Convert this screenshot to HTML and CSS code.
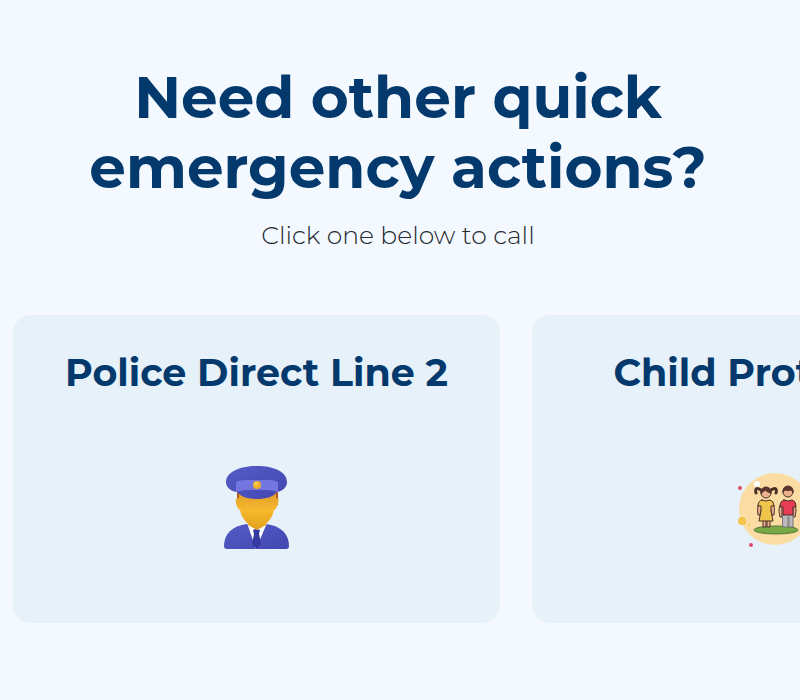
FILE: index.html
```html
<!DOCTYPE html>
<html lang="en">
<head>
<meta charset="utf-8">
<meta name="viewport" content="width=device-width, initial-scale=1">
<title>Emergency actions</title>
<link rel="stylesheet" href="styles.css">
</head>
<body>
<main class="page">
  <header class="intro">
    <h1 class="intro-title">Need other quick emergency actions?</h1>
    <p class="intro-text">Click one below to call</p>
  </header>
  <nav class="cards" aria-label="Emergency contacts">
    <a class="card" href="#police">
      <h2 class="card-title">Police Direct Line 2</h2>
      <svg class="card-icon" viewBox="0 0 96 96" aria-hidden="true">
        <defs>
          <linearGradient id="skin" x1="0" y1="0" x2="0" y2="1"><stop offset="0" stop-color="#e09a2a"/><stop offset=".5" stop-color="#f6b82c"/><stop offset="1" stop-color="#e3a11f"/></linearGradient>
          <linearGradient id="coat" x1="0" y1="0" x2="1" y2="1"><stop offset="0" stop-color="#545cc6"/><stop offset="1" stop-color="#4347b0"/></linearGradient>
        </defs>
        <path d="M15 86C15 74 23 66 38 64h19c15 2 23 10 23 22q0 3-3 3H18q-3 0-3-3Z" fill="url(#coat)"/>
        <path d="M38 63 47 89 58 63Z" fill="#fff"/>
        <path d="m44 70 3-1 4 1-1 4 2 10-4 5-5-5 2-10Z" fill="#3438a0"/>
        <path d="M28 31h6v14h-6ZM63 31h6v14h-6Z" fill="#b35a1b"/>
        <path d="M30 30h37v8c3 0 3 2 2 5-1 4-2 6-4 7-1 6-4 10-8 14v1l-9 5-9-5v-1c-4-4-7-8-8-14-2-1-3-3-4-7-1-3 0-5 3-5Z" fill="url(#skin)"/>
        <path d="M28 32C21 31 17 27 17 22 17 12 31 6 48 6s30 6 30 16c0 5-4 9-10 10-4 5-11 7-20 7s-16-2-20-7Z" fill="url(#coat)"/>
        <path d="M27 22q4-2 9-2h24q5 0 9 2v10q-6-2-11-2H38q-5 0-11 2Z" fill="#7476df"/>
        <circle cx="48" cy="25" r="4" fill="#f0b02a"/><circle cx="47" cy="24" r="2" fill="#fbc94c"/>
      </svg>
    </a>
    <a class="card" href="#child">
      <h2 class="card-title">Child Protection</h2>
      <svg class="card-icon" viewBox="0 0 96 96" aria-hidden="true">
        <circle cx="47" cy="49" r="36" fill="#fbdda4"/>
        <circle cx="12" cy="28" r="2" fill="#dc4e69"/><circle cx="23" cy="85" r="2" fill="#dc4e69"/>
        <circle cx="14" cy="61" r="4" fill="#f5c44b"/><circle cx="29" cy="24" r="3" fill="#fff"/><circle cx="21" cy="65" r="1" fill="#f5c44b"/>
        <ellipse cx="48" cy="70" rx="22" ry="4" fill="#78a944" stroke="#55733a"/>
        <g stroke="#493029" stroke-linecap="round" stroke-linejoin="round">
          <path d="M33 30c-5-3-6-1-5 3M43 30c5-3 6-1 5 3" fill="none" stroke-width="3"/>
          <circle cx="38" cy="33" r="5" fill="#efb18d"/>
          <path d="M33 33c-1-8 11-8 10 0q-4-1-6-3-1 2-4 3Z" fill="#60392e"/>
          <path d="M33 42c-3 1-4 4-3 13h2l2-9M43 42c3 1 4 4 3 13h-2l-2-9" fill="#efb18d"/>
          <path d="M35 60v7h3v-7h1v7h3v-7" fill="#f0b08e"/>
          <path d="m34 40 4 1 4-1q4 1 4 6h-3v5l2 10H31l2-10v-5h-3q0-5 4-6Z" fill="#efc54d"/>
          <path d="M53 44c-3 4-2 8-1 13h2v-9M66 44c3 4 2 8 1 13h-2v-9" fill="#efb18d"/>
          <circle cx="60" cy="32" r="5" fill="#efb18d"/>
          <path d="M55 32c-1-8 11-8 10 0l-2-2q-4 1-6 0Z" fill="#60392e"/>
          <path d="M55 53h10v14h-4V57h-1v10h-5Z" fill="#bdbbc0" stroke="#77727a"/>
          <path d="m56 40 4 1 4-1q4 1 4 7h-3v8H55v-8h-3q0-6 4-7Z" fill="#e63c55"/>
        </g>
      </svg>
    </a>
  </nav>
</main>
</body>
</html>
```
FILE: styles.css
```css
* { box-sizing: border-box; }
body {
  margin: 0;
  background: #f3f9ff;
  color: #03396c;
  font-family: Montserrat, Inter, "Open Sans", sans-serif;
}
.page { padding: 63px 0 76px 13px; overflow: hidden; }
.intro { padding-right: 17px; text-align: center; }
.intro-title {
  max-width: 680px;
  margin: 0 auto;
  font-size: 58px;
  font-weight: 700;
  line-height: 70px;
}
.intro-text {
  margin: 16px 0 64px;
  color: #24292e;
  font-size: 25px;
  font-weight: 300;
  line-height: 32px;
}
.cards {
  display: grid;
  grid-auto-flow: column;
  grid-auto-columns: calc(61vw - 1px);
  gap: 32px;
}
.card {
  display: flex;
  flex-direction: column;
  align-items: center;
  gap: 65px;
  padding: 36px 24px 67px;
  border-radius: 18px;
  background: #e6f1f9;
  color: inherit;
  text-decoration: none;
}
.card-title {
  margin: 0;
  font-size: 38px;
  font-weight: 700;
  line-height: 44px;
  white-space: nowrap;
}
.card-icon { width: 96px; height: 96px; }
```
